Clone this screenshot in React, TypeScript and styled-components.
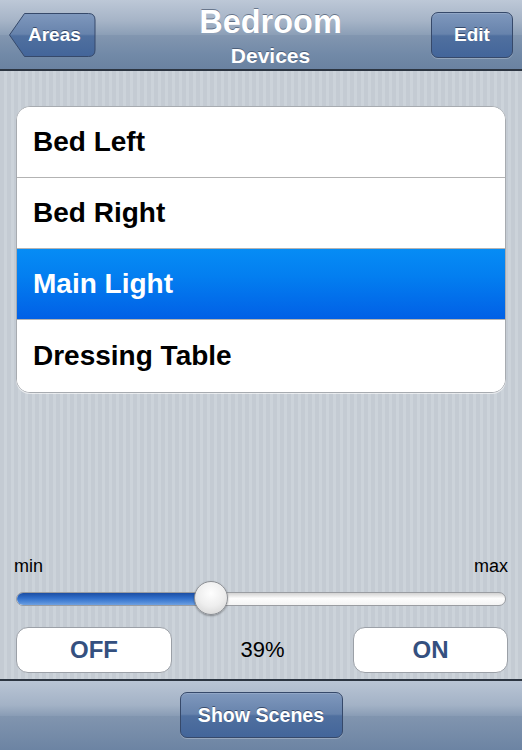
import React from "react";
import styled, { createGlobalStyle } from "styled-components";

const Global = createGlobalStyle`
  html, body { margin: 0; padding: 0; }
  body { width: 522px; height: 750px; overflow: hidden; font-family: "Liberation Sans", Arial, sans-serif; }
  * { box-sizing: border-box; }
`;

const Screen = styled.div`
  width: 522px;
  height: 750px;
  display: flex;
  flex-direction: column;
`;

const barGradient = `linear-gradient(180deg, #bdc8d7 0%, #a6b4c7 30%, #8c9fb7 50%, #8296b0 51%, #7189a7 80%, #6a82a1 100%)`;

const NavBar = styled.header`
  height: 71px;
  flex: none;
  background: ${barGradient};
  border-bottom: 2px solid #2c3541;
  display: grid;
  grid-template-columns: 1fr auto 1fr;
  align-items: start;
  padding: 12px 9px 0 8px;
`;

const TitleBlock = styled.div`
  display: flex;
  flex-direction: column;
  align-items: center;
  margin-top: -5px;
  padding-left: 20px;
  color: #fff;
  font-weight: bold;
  text-shadow: 0 -1px 0 rgba(40, 55, 80, 0.55);
`;

const Title = styled.div`
  font-size: 32.5px;
  line-height: 31px;
`;

const Subtitle = styled.div`
  font-size: 21px;
  line-height: 21px;
  margin-top: 7px;
`;

const BackButton = styled.div`
  position: relative;
  justify-self: start;
  width: 88px;
  height: 46px;
  display: flex;
  align-items: center;
  padding-left: 20px;
  color: #fff;
  font-weight: bold;
  font-size: 19px;
  text-shadow: 0 -1px 0 rgba(20, 35, 60, 0.6);
  svg { position: absolute; left: 0; top: 0; }
  span { position: relative; }
`;

const BarButton = styled.div<{ $width: number }>`
  justify-self: ${(p) => (p.$width > 100 ? "center" : "end")};
  width: ${(p) => p.$width}px;
  height: 46px;
  border-radius: 7px;
  border: 1px solid #36496a;
  background: linear-gradient(180deg, #7f98bd 0%, #6783ac 48%, #50709f 52%, #43659a 100%);
  box-shadow: 0 1px 0 rgba(255, 255, 255, 0.25), inset 0 1px 0 rgba(255, 255, 255, 0.15);
  display: flex;
  align-items: center;
  justify-content: center;
  color: #fff;
  font-weight: bold;
  font-size: ${(p) => (p.$width > 100 ? 19.6 : 19)}px;
  text-shadow: 0 -1px 0 rgba(20, 35, 60, 0.6);
`;

const Content = styled.main`
  flex: 1;
  display: flex;
  flex-direction: column;
  padding: 35px 0 6px;
  background: repeating-linear-gradient(90deg, #c4cbd3 0 4px, #ccd3da 4px 7px);
`;

const Table = styled.div`
  margin: 0 16px;
  border: 1px solid #a7abb0;
  border-radius: 14px;
  background: #fff;
  overflow: hidden;
  box-shadow: 0 1px 0 rgba(255, 255, 255, 0.6);
`;

const Row = styled.div<{ $selected?: boolean }>`
  height: 71px;
  display: flex;
  align-items: center;
  padding-left: 16px;
  font-size: 28px;
  font-weight: bold;
  color: ${(p) => (p.$selected ? "#fff" : "#000")};
  background: ${(p) => (p.$selected ? "linear-gradient(180deg, #068cf5 0%, #037ef0 40%, #0160e6 100%)" : "#fff")};
  border-bottom: 1px solid #b3b3b3;
  &:last-child { border-bottom: none; height: 72px; }
`;

const Controls = styled.section`
  margin-top: auto;
  display: flex;
  flex-direction: column;
`;

const LabelRow = styled.div`
  display: flex;
  justify-content: space-between;
  padding: 0 14px;
  font-size: 18px;
  line-height: 20px;
  color: #000;
`;

const SliderBox = styled.div`
  position: relative;
  margin: 5px 16px 0;
  height: 34px;
  display: flex;
  align-items: center;
`;

const Track = styled.div`
  flex: 1;
  height: 14px;
  margin-top: 2px;
  border-radius: 7px;
  border: 1px solid #9a9da2;
  background: linear-gradient(180deg, #d2d2d2 0%, #fdfdfd 45%, #f4f4f4 100%);
  overflow: hidden;
  display: flex;
`;

const Fill = styled.div`
  height: 100%;
  background: linear-gradient(180deg, #1c4ea3 0%, #2e6cc8 40%, #4f89d8 75%, #6fa0e0 100%);
`;

const Thumb = styled.div`
  position: absolute;
  top: 0;
  width: 34px;
  height: 34px;
  border-radius: 50%;
  border: 1px solid #8d9095;
  background: radial-gradient(circle at 50% 35%, #fefefe 0%, #eeeeee 50%, #cfcfcf 100%);
  box-shadow: 0 1px 2px rgba(0, 0, 0, 0.35);
`;

const ButtonRow = styled.div`
  margin: 12px 14px 0 16px;
  display: grid;
  grid-template-columns: 156px 1fr 155px;
  align-items: center;
`;

const WhiteButton = styled.div`
  height: 46px;
  border-radius: 12px;
  border: 1px solid #9ba0a7;
  background: #fff;
  display: flex;
  align-items: center;
  justify-content: center;
  font-size: 24px;
  font-weight: bold;
  color: #34507f;
`;

const Percent = styled.div`
  text-align: center;
  font-size: 22px;
  color: #000;
`;

const ToolBar = styled.footer`
  height: 71px;
  flex: none;
  border-top: 2px solid #2c3541;
  background: linear-gradient(180deg, #b9c5d5 0%, #a3b2c6 35%, #8a9db6 50%, #8195af 51%, #6c84a3 100%);
  padding-top: 11px;
  display: flex;
  justify-content: center;
`;

const value = 0.39;

export default function App() {
  const trackWidth = 490;
  const thumbLeft = value * (trackWidth - 34);
  return (
    <>
      <Global />
      <Screen>
        <NavBar>
          <BackButton>
            <svg width="88" height="46" viewBox="0 0 88 46">
              <defs>
                <linearGradient id="bk" x1="0" y1="0" x2="0" y2="1">
                  <stop offset="0" stopColor="#7f98bd" />
                  <stop offset="0.48" stopColor="#6783ac" />
                  <stop offset="0.52" stopColor="#50709f" />
                  <stop offset="1" stopColor="#43659a" />
                </linearGradient>
              </defs>
              <path
                d="M1.5 23 L16.5 1.5 H80.5 Q87 1.5 87 8 V38 Q87 44.5 80.5 44.5 H16.5 Z"
                fill="url(#bk)"
                stroke="#36496a"
                strokeWidth="1"
                strokeLinejoin="round"
              />
            </svg>
            <span>Areas</span>
          </BackButton>
          <TitleBlock>
            <Title>Bedroom</Title>
            <Subtitle>Devices</Subtitle>
          </TitleBlock>
          <BarButton $width={82}>Edit</BarButton>
        </NavBar>
        <Content>
          <Table>
            <Row>Bed Left</Row>
            <Row>Bed Right</Row>
            <Row $selected>Main Light</Row>
            <Row>Dressing Table</Row>
          </Table>
          <Controls>
            <LabelRow>
              <span>min</span>
              <span>max</span>
            </LabelRow>
            <SliderBox>
              <Track>
                <Fill style={{ width: `${thumbLeft + 17}px` }} />
              </Track>
              <Thumb style={{ left: `${thumbLeft}px` }} />
            </SliderBox>
            <ButtonRow>
              <WhiteButton>OFF</WhiteButton>
              <Percent>39%</Percent>
              <WhiteButton>ON</WhiteButton>
            </ButtonRow>
          </Controls>
        </Content>
        <ToolBar>
          <BarButton $width={163}>Show Scenes</BarButton>
        </ToolBar>
      </Screen>
    </>
  );
}
